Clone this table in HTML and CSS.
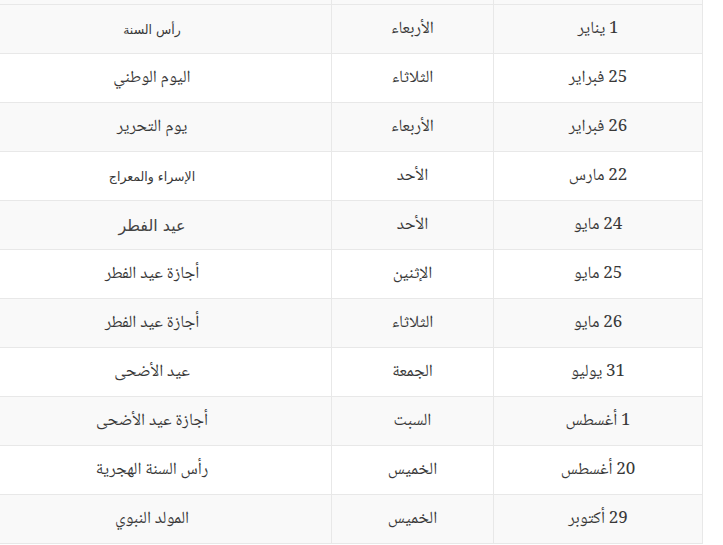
FILE: index.html
```html
<!DOCTYPE html>
<html lang="ar">
<head>
<meta charset="utf-8">
<link rel="stylesheet" href="styles.css">
</head>
<body>
<div class="wrap">
<table class="holidays" dir="rtl">
<tbody>
<tr class="cut"><td></td><td></td><td></td></tr>
<tr><td>1 يناير</td><td>الأربعاء</td><td class="small">رأس السنة</td></tr>
<tr><td>25 فبراير</td><td>الثلاثاء</td><td>اليوم الوطني</td></tr>
<tr><td>26 فبراير</td><td>الأربعاء</td><td>يوم التحرير</td></tr>
<tr><td>22 مارس</td><td>الأحد</td><td class="small">الإسراء والمعراج</td></tr>
<tr><td>24 مايو</td><td>الأحد</td><td class="sans">عيد الفطر</td></tr>
<tr><td>25 مايو</td><td>الإثنين</td><td>أجازة عيد الفطر</td></tr>
<tr><td>26 مايو</td><td>الثلاثاء</td><td>أجازة عيد الفطر</td></tr>
<tr><td>31 يوليو</td><td>الجمعة</td><td>عيد الأضحى</td></tr>
<tr><td>1 أغسطس</td><td>السبت</td><td>أجازة عيد الأضحى</td></tr>
<tr><td>20 أغسطس</td><td>الخميس</td><td>رأس السنة الهجرية</td></tr>
<tr><td>29 أكتوبر</td><td>الخميس</td><td>المولد النبوي</td></tr>
</tbody>
</table>
</div>
</body>
</html>
```
FILE: styles.css
```css
html, body {
  margin: 0;
  padding: 0;
  background: #ffffff;
  overflow: hidden;
}
.wrap {
  width: 731px;
  margin-left: -28px;
  margin-top: -45px;
}
.holidays {
  width: 731px;
  border-collapse: collapse;
  table-layout: fixed;
  font-family: "Noto Naskh Arabic", "Noto Sans Arabic", "DejaVu Sans", serif;
  font-size: 17px;
  color: #383838;
}
.holidays td {
  height: 48px;
  padding: 0;
  text-align: center;
  vertical-align: middle;
  border: 1px solid #e8e8e8;
}
.holidays td:nth-child(1) { width: 208px; }
.holidays td:nth-child(2) { width: 161px; }
.holidays tr:nth-child(even) td { background: #f9f9f9; }
.holidays tr:nth-child(odd) td { background: #ffffff; }
.holidays tr.cut td { background: #f9f9f9; }
.holidays td.small {
  font-family: "DejaVu Sans", sans-serif;
  font-size: 12.5px;
}
.holidays td.sans {
  font-family: "DejaVu Sans", sans-serif;
  font-size: 16px;
  color: #444444;
}
```
